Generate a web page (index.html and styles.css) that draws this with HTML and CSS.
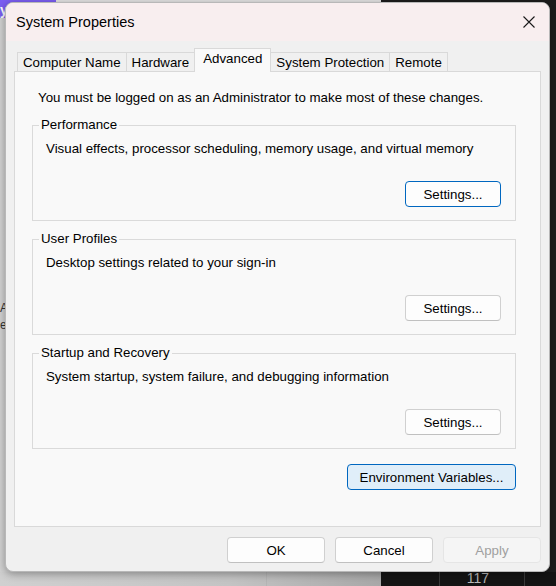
FILE: index.html
```html
<!DOCTYPE html>
<html lang="en">
  <head>
    <meta charset="UTF-8" />
    <title>System Properties</title>
    <link rel="stylesheet" href="styles.css">
  </head>
  <body>
    <div class="desktop">
      <div class="bg-purple">y</div>
      <div class="bg-top"></div>
      <div class="bg-dark"></div>
      <div class="bg-left-text">A<br />er</div>
      <div class="taskbar">
        <div class="taskbar-light">
          <span class="cell"></span>
          <span class="cell"></span>
        </div>
        <div class="taskbar-dark">
          <span class="cell-dark"></span>
          <span class="cell-dark num">117</span>
          <span class="cell-dark"></span>
        </div>
      </div>

      <div class="window">
        <div class="titlebar">
          <span class="title">System Properties</span>
          <svg class="close" width="12" height="12" viewBox="0 0 12 12">
            <path d="M0.5 0.5 L11.5 11.5 M11.5 0.5 L0.5 11.5" stroke="#1a1a1a" stroke-width="1.1" fill="none" />
          </svg>
        </div>

        <div class="content">
          <div class="tabs">
            <div class="tab">Computer Name</div>
            <div class="tab tab-wide">Hardware</div>
            <div class="tab active">Advanced</div>
            <div class="tab">System Protection</div>
            <div class="tab">Remote</div>
          </div>

          <div class="panel">
            <p class="notice">You must be logged on as an Administrator to make most of these changes.</p>

            <fieldset class="group">
              <legend>Performance</legend>
              <p class="desc">Visual effects, processor scheduling, memory usage, and virtual memory</p>
              <div class="group-actions">
                <button class="btn btn-focus">Settings...</button>
              </div>
            </fieldset>

            <fieldset class="group">
              <legend>User Profiles</legend>
              <p class="desc">Desktop settings related to your sign-in</p>
              <div class="group-actions">
                <button class="btn">Settings...</button>
              </div>
            </fieldset>

            <fieldset class="group">
              <legend>Startup and Recovery</legend>
              <p class="desc">System startup, system failure, and debugging information</p>
              <div class="group-actions">
                <button class="btn">Settings...</button>
              </div>
            </fieldset>

            <div class="env-row">
              <button class="btn btn-env">Environment Variables...</button>
            </div>
          </div>

          <div class="footer">
            <button class="btn">OK</button>
            <button class="btn">Cancel</button>
            <button class="btn btn-disabled">Apply</button>
          </div>
        </div>
      </div>
    </div>
  </body>
</html>
```

FILE: styles.css
```css
body {
  margin: 0;
  font-family: "Liberation Sans", Arial, sans-serif;
  font-size: 13.3px;
  color: #000;
  background: #d6d6d6;
}

.desktop {
  position: relative;
  width: 556px;
  height: 586px;
  overflow: hidden;
  background: linear-gradient(to right, #d2d2d2, #dcdcdc);
}

/* bits of other windows peeking out behind the dialog */
.bg-purple {
  position: absolute;
  left: 0;
  top: 0;
  width: 56px;
  height: 18px;
  background: #7b5ef2;
  color: #fff;
  font-weight: bold;
  font-size: 14px;
  line-height: 20px;
}

.bg-top {
  position: absolute;
  left: 56px;
  top: 0;
  width: 325px;
  height: 4px;
  background: #e4e4e4;
}

.bg-dark {
  position: absolute;
  left: 381px;
  top: 0;
  right: 0;
  bottom: 0;
  background: #1c1c1c;
}

.bg-left-text {
  position: absolute;
  left: 0;
  top: 300px;
  font-size: 12px;
  line-height: 17px;
  color: #333;
}

.taskbar {
  position: absolute;
  left: 0;
  bottom: 0;
  width: 556px;
  height: 14px;
  display: flex;
}

.taskbar-light {
  flex-shrink: 0;
  width: 381px;
  display: flex;
  background: linear-gradient(to right, #d0d0d0, #c4c4c4 60%, #a8a8a8);
  padding-left: 266px;
  box-sizing: border-box;
}

.taskbar-light .cell {
  width: 43px;
  border-left: 1px solid #b4b4b4;
}

.taskbar-dark {
  flex: 1;
  display: flex;
  background: #141414;
}

.cell-dark {
  flex-shrink: 0;
  width: 58px;
}

.cell-dark.num {
  width: 86px;
  padding-right: 8px;
  box-sizing: border-box;
  border-left: 1px solid #3a3a3a;
  border-right: 1px solid #3a3a3a;
  color: #b8b8b8;
  font-size: 14px;
  line-height: 13px;
  text-align: center;
}

.window {
  position: absolute;
  left: 5px;
  top: 2px;
  width: 545px;
  height: 570px;
  box-sizing: border-box;
  background: #f0f0f0;
  border: 1px solid #b8b8b8;
  border-radius: 8px;
  box-shadow: 0 2px 8px rgba(0, 0, 0, 0.35);
  overflow: hidden;
}

.titlebar {
  height: 38px;
  display: flex;
  align-items: center;
  justify-content: space-between;
  padding: 0 14px 0 10px;
  background: #f8eeef;
}

.title {
  font-size: 14.5px;
  padding-bottom: 1px;
}

.close {
  display: block;
  margin-top: -1px;
}

.content {
  padding: 7px 8px 0 8px;
}

.tabs {
  display: flex;
  align-items: flex-end;
  height: 23px;
  padding-left: 3px;
}

.tab {
  height: 19px;
  line-height: 20px;
  padding: 0 5px;
  background: #f0f0f0;
  border: 1px solid #d9d9d9;
  border-bottom: none;
  margin-right: -1px;
  box-sizing: border-box;
}

.tab-wide {
  padding: 0 6px 0 5px;
}

.tab.active {
  position: relative;
  z-index: 1;
  height: 24px;
  line-height: 20px;
  padding: 0 8px;
  margin: 0 -1px -1px -1px;
  background: #f9f9f9;
}

.panel {
  height: 456px;
  box-sizing: border-box;
  background: #f9f9f9;
  border: 1px solid #d9d9d9;
  padding: 18px 24px 0 17px;
}

.notice {
  margin: 0 0 11px 6px;
  line-height: 16px;
}

.group {
  margin: 0 0 10px 0;
  padding: 8px 14px 13px 13px;
  border: 1px solid #dadada;
}

.group legend {
  margin-left: -7px;
  padding: 0 2px;
  line-height: 16px;
}

.desc {
  margin: 0;
  line-height: 16px;
}

.group-actions {
  display: flex;
  justify-content: flex-end;
  margin-top: 24px;
}

.btn {
  font-family: inherit;
  font-size: 13.3px;
  color: #000;
  height: 26px;
  width: 96px;
  padding: 0;
  background: #fdfdfd;
  border: 1px solid #d0d0d0;
  border-bottom-color: #c0c0c0;
  border-radius: 4px;
}

.btn-focus {
  border: 1px solid #0067c0;
}

.env-row {
  display: flex;
  justify-content: flex-end;
  margin-top: 15px;
}

.btn-env {
  width: 169px;
  background: #e0eef9;
  border: 1px solid #0067c0;
}

.footer {
  display: flex;
  justify-content: flex-end;
  gap: 10px;
  padding: 10px 0 0 0;
}

.footer .btn {
  width: 98px;
}

.btn-disabled {
  background: #f5f5f5;
  border-color: #e5e5e5;
  color: #a0a0a0;
}
```
